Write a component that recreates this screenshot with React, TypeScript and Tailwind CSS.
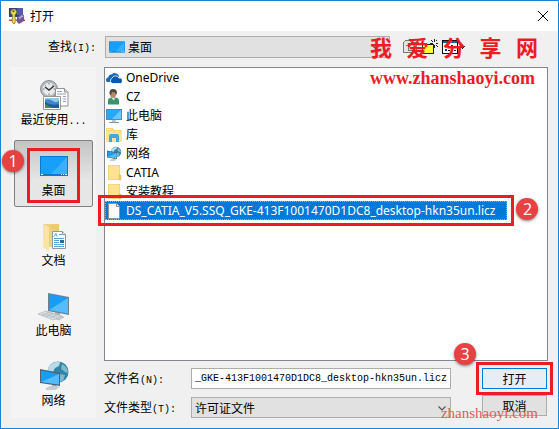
import type { ReactNode } from 'react';

const places = [
  { name: '最近使用', dots: true, icon: <RecentIcon /> },
  { name: '桌面', active: true, icon: <DesktopIcon className="w-8 h-8" /> },
  { name: '文档', icon: <DocumentsIcon /> },
  { name: '此电脑', icon: <ComputerIcon /> },
  { name: '网络', icon: <NetworkIcon className="w-8 h-8" /> },
];

const files = [
  { name: 'OneDrive', icon: <CloudIcon /> },
  { name: 'CZ', icon: <UserIcon /> },
  { name: '此电脑', icon: <MonitorIcon /> },
  { name: '库', icon: <LibraryIcon /> },
  { name: '网络', icon: <NetworkIcon className="w-4 h-4" /> },
  { name: 'CATIA', icon: <FolderIcon /> },
  { name: '安装教程', icon: <FolderIcon /> },
  { name: 'DS_CATIA_V5.SSQ_GKE-413F1001470D1DC8_desktop-hkn35un.licz', selected: true, icon: <FileIcon /> },
];

function KeyIcon() {
  return (
    <svg viewBox="0 0 16 16" className="w-4 h-4">
      <path d="M0 0h14v9H0z" fill="#343a86" />
      <path d="M8 0h6v7H8z" fill="#525ba8" />
      <path d="M0 11.500h16v1.500H0z" fill="#e23b4b" />
      <path d="M8 9l4-3 3 1v6l-5 3-2-2z" fill="#6e5694" />
      <path d="M9 10l4-3 2 1-4 3z" fill="#b3a5cf" />
      <path d="M4.500 1a3 3 0 0 0-1.200 5.700V14l1.500 2L6 15v-1.500l1.500-1L6 11.500V6.700A3 3 0 0 0 4.500 1z" fill="#e8dc4a" stroke="#77701c" strokeWidth=".7" />
      <circle cx="4.500" cy="3.300" r="1" fill="#343a86" />
    </svg>
  );
}

function DesktopIcon({ className }: { className: string }) {
  return (
    <svg viewBox="0 0 32 32" className={className}>
      <path d="M2 6h28v20H2z" fill="#0a78d0" />
      <path d="M3 7h26v17H3z" fill="#16a0fa" />
      <path d="M29 7v17H13z" fill="#38b0ff" />
      <path d="M3 24h2v1H3zM23 24h1v1h-1zM25 24h1v1h-1zM27 24h2v1h-2z" fill="#fff" />
    </svg>
  );
}

function RecentIcon() {
  return (
    <svg viewBox="0 0 32 32" className="w-8 h-8">
      <circle cx="11" cy="10" r="8.500" fill="#b4b8bc" stroke="#8b9094" />
      <circle cx="11" cy="10" r="6.300" fill="#e8eaeb" />
      <path d="M11 4v1.500M11 14.500V16M5 10h1.500M15.500 10H17M6.800 5.800l1 1M15.200 5.800l-1 1" stroke="#777" />
      <path d="M7 8l4 3 5-4" stroke="#333" strokeWidth="1.400" fill="none" />
      <path d="M17.500 9.500h9l3.500 3.500v14H17.500z" fill="#fff" stroke="#929292" />
      <path d="M26.500 9.500V13H30" fill="#ddd" stroke="#929292" />
      <path d="M19 12.500h5M19 15h9M25 17.500h3M25 20h3M25 22.500h3" stroke="#8fa3b8" />
      <path d="M5.500 17.500h17v13h-17z" fill="#fff" stroke="#999" />
      <path d="M7 19h14v10H7z" fill="#8fcaf2" />
      <path d="M7 21q4-2 8 1t6-1v8H7z" fill="#3b87c8" />
      <path d="M7 23q6 4 14 2v4H7z" fill="#1f5c95" />
      <path d="M7 25q5 3 8 4H7z" fill="#4f8b4a" />
    </svg>
  );
}

function DocumentsIcon() {
  return (
    <svg viewBox="0 0 32 32" className="w-8 h-8">
      <path d="M5 4h16v23H10z" fill="#f1d27c" />
      <path d="M5 4l6 3v24l-6-4z" fill="#fbe3a0" />
      <path d="M11 7l3-3h7v8" fill="#eccb70" />
      <path d="M14.500 11.500h10l3 3v14h-13z" fill="#fff" stroke="#8d99a5" />
      <path d="M24.500 11.500v3h3" fill="#d8dfe6" stroke="#8d99a5" />
      <path d="M16 16.500l2-3 1 3M21 14.500h3M16 18.500h10M16 20.500h5M16 22.500h5M16 24.500h10M16 26.500h10" stroke="#58a4dc" fill="none" />
      <path d="M22 20h4v3h-4z" fill="#286b9f" />
    </svg>
  );
}

function ComputerIcon() {
  return (
    <svg viewBox="0 0 32 32" className="w-8 h-8">
      <path d="M17 22l5 1v4h-5z" fill="#a9b5be" />
      <path d="M14 28l5-2 7 1-5 3z" fill="#c8d0d6" stroke="#9aa5ad" strokeWidth=".5" />
      <path d="M10 3l21 4v18l-21-4z" fill="#6e7f8d" />
      <path d="M11 4l19 4v15.500L11 20z" fill="#1b9cf2" />
      <path d="M30 8v15.500L11 20z" fill="#55bdff" />
      <path d="M0 24l8-3 16 5-9 4z" fill="#e2e5e8" stroke="#a4abb1" strokeWidth=".6" />
      <path d="M3 24l14 4M5.500 23l13.500 4.500M8 22l13 4.500M4 26l7-4M8 27l7-4M12 28.500l7-4" stroke="#aab1b7" strokeWidth=".6" />
    </svg>
  );
}

function NetworkIcon({ className }: { className: string }) {
  return (
    <svg viewBox="0 0 32 32" className={className}>
      <circle cx="20" cy="12" r="10.500" fill="#3184a8" />
      <path d="M12 5q5-4 10-3l-1 4-4 2-2 4-5-1q0-4 2-6z" fill="#b8dbe7" />
      <path d="M24 4q6 3 6 9l-3-1-4-3zM22 14l5 1-2 6-4 1z" fill="#7fb9ce" />
      <path d="M14 23l4 1v4h-4z" fill="#9aa7b1" />
      <path d="M8 28q6-4 14-1l-5 3H8z" fill="#c5cdd3" />
      <path d="M2 9l20 4v13L2 23z" fill="#52616d" />
      <path d="M3 10.500l18 3.500v10.500L3 22z" fill="#199cf4" />
      <path d="M21 14v10.500L3 22z" fill="#54bbff" />
    </svg>
  );
}

function CloudIcon() {
  return (
    <svg viewBox="0 0 16 16" className="w-4 h-4">
      <path d="M1 12a2.500 2.500 0 0 1 1.200-4.500A4 4 0 0 1 6 4.300 4.300 4.300 0 0 1 12.500 5L13 7 5 12z" fill="#1667b7" />
      <path d="M6.500 13.500a2.800 2.800 0 0 1-.4-5.300A3.600 3.600 0 0 1 12.800 8a2.800 2.800 0 0 1 1.700 5.500z" fill="#0c59a8" stroke="#fff" strokeWidth=".8" />
    </svg>
  );
}

function UserIcon() {
  return (
    <svg viewBox="0 0 16 16" className="w-4 h-4">
      <path d="M2 15.500V11q0-2 4-2.500h3q4 0 4 3.500v3.500z" fill="#3d9270" />
      <path d="M5 8.500l3 3 1-3z" fill="#eee" />
      <ellipse cx="7" cy="5" rx="3" ry="4" fill="#b68a68" />
      <path d="M3.500 5q-.5-5 3.500-5t4 4l-1 2-1-2.500-3-.5-1 3z" fill="#51473c" />
    </svg>
  );
}

function MonitorIcon() {
  return (
    <svg viewBox="0 0 16 16" className="w-4 h-4">
      <path d="M0 1h16v11H0z" fill="#4a8fbd" />
      <path d="M1 2h14v9H1z" fill="#27a8f6" />
      <path d="M15 2v9H6z" fill="#69c7ff" />
      <path d="M6 12h4v2H6z" fill="#b7c6d0" />
      <path d="M3 14h10v1H3z" fill="#7f98a7" />
    </svg>
  );
}

function LibraryIcon() {
  return (
    <svg viewBox="0 0 16 16" className="w-4 h-4">
      <path d="M0 1h7l1 2h8v12H0z" fill="#f8d671" />
      <path d="M0 4h16v11H0z" fill="#ffe397" />
      <path d="M1 2h4v1H1z" fill="#fff" />
      <path d="M3 15V9q0-2 2-2h6q2 0 2 2v6h-3v-4H6v4z" fill="#3fa9d8" />
    </svg>
  );
}

function FolderIcon() {
  return (
    <svg viewBox="0 0 16 16" className="w-4 h-4">
      <path d="M2 0h12v10l1 1v4H2z" fill="#e8c767" />
      <path d="M2.500.5h11v14h-11z" fill="#ffe391" />
      <path d="M13 10h2v5h-2z" fill="#f2d077" stroke="#d6b04c" strokeWidth=".5" />
    </svg>
  );
}

function FileIcon() {
  return (
    <svg viewBox="0 0 16 16" className="w-4 h-4">
      <path d="M2.500.5h8l3 3v12h-11z" fill="#fafafa" stroke="#929292" />
      <path d="M10.500.5v3h3" fill="#ddd" stroke="#929292" />
    </svg>
  );
}

function Arrow({ className }: { className: string }) {
  return (
    <svg viewBox="0 0 8 5" className={`absolute w-2 h-[5px] pointer-events-none ${className}`}>
      <path d="M.5.5L4 4 7.500.5" fill="none" stroke="#555" strokeWidth="1.200" />
    </svg>
  );
}

// Latin part of a label, half the width of a Chinese character
function Half({ children }: { children: ReactNode }) {
  return <span className="font-['Liberation_Mono',monospace] text-[10px]">{children}</span>;
}

function Badge({ n, className }: { n: number; className: string }) {
  return (
    <span className={`absolute z-10 w-[22px] h-[22px] rounded-full bg-[#e84143] text-white font-['Open_Sans',sans-serif] text-base leading-[22px] text-center shadow-[0_1px_3px_rgba(0,0,0,0.5)] ${className}`}>
      {n}
    </span>
  );
}

function Frame({ className }: { className: string }) {
  return <span className={`absolute border-3 border-[#ed1c24] pointer-events-none ${className}`}></span>;
}

export default function App() {
  return (
    <div className="relative min-h-screen flex flex-col border border-[#1883d7] bg-[#f0f0f0] text-black text-xs font-['Noto_Sans_CJK_SC',sans-serif]">
      <header className="h-[30px] flex items-center bg-white pl-2 pr-[10px]">
        <KeyIcon />
        <h1 className="ml-[5px] flex-1">打开</h1>
        <button aria-label="关闭">
          <svg viewBox="0 0 10 10" className="w-[10px] h-[10px]">
            <path d="M0 0l10 10M10 0L0 10" stroke="#000" />
          </svg>
        </button>
      </header>

      <div className="flex-1 flex flex-col gap-[9px] px-[10px] pt-[5px] pb-[10px]">
        <div className="flex items-center">
          <label htmlFor="lookin" className="w-[94px] pl-[37px]">
            查找<Half>(I):</Half>
          </label>
          <div className="relative flex-1">
            <DesktopIcon className="absolute left-[3px] top-[2px] w-[18px] h-[18px]" />
            <select id="lookin" className="block w-full h-[22px] appearance-none border border-[#adadad] bg-[#e1e1e1] pl-[22px]">
              <option>桌面</option>
            </select>
            <Arrow className="right-[10px] top-[9px]" />
          </div>
          <div className="relative w-[158px] flex items-center gap-1 pl-3">
            <button aria-label="向上一级">
              <svg viewBox="0 0 16 16" className="w-4 h-4" shapeRendering="crispEdges">
                <path d="M1.500 3.500l2-2h4l2 2h5v10h-13z" fill="#e4e4e4" stroke="#777" />
                <path d="M4 6.500h5M6.500 5v6H11" stroke="#777" fill="none" />
              </svg>
            </button>
            <button aria-label="新建文件夹">
              <svg viewBox="0 0 16 16" className="w-4 h-4" shapeRendering="crispEdges">
                <path d="M.5 14.500v-9l1-1h3l1 1h6v9z" fill="#ffff3c" stroke="#222" />
                <path d="M12.500 0v3M12.500 6v3M8 4.500h3M14 4.500h2M9 1l2 2M14 6l2 2M15 1l-1 1" stroke="#222" />
              </svg>
            </button>
            <button aria-label="查看菜单">
              <svg viewBox="0 0 24 16" className="w-6 h-4" shapeRendering="crispEdges">
                <path d="M.5 1.500h15v13H.5z" fill="#fff" stroke="#111" />
                <path d="M1 2h14v2H1z" fill="#1463a5" />
                <path d="M3 6h2v2H3zM9 6h2v2H9zM3 10h2v2H3zM9 10h2v2H9z" fill="#2026a0" />
                <path d="M6 7h2M12 7h2M6 11h2M12 11h2" stroke="#111" />
                <path d="M17 7h6l-3 3z" fill="#111" />
              </svg>
            </button>
            <div className="absolute -left-5 -top-2 w-[168px] text-[#ed1c24] pointer-events-none">
              <p className="flex justify-between text-[22px] leading-[30px] font-bold">
                <span>我</span>
                <span>爱</span>
                <span>分</span>
                <span>享</span>
                <span>网</span>
              </p>
              <p className="font-['Liberation_Serif',serif] text-lg leading-[34px] font-bold whitespace-nowrap">www.zhanshaoyi.com</p>
            </div>
          </div>
        </div>

        <div className="flex-1 flex gap-2">
          <nav className="w-[85px] bg-[#f4f4f4] p-[3px] pb-px flex flex-col gap-[3px]">
            {places.map((place) => (
              <div key={place.name} className="relative">
                <button
                  className={`w-full h-[67px] flex flex-col items-center justify-center pt-[1px] ${
                    place.active ? 'border border-[#808080] rounded-xs bg-linear-to-b from-[#c4c4c4] to-[#e6e6e6] to-60%' : ''
                  }`}
                >
                  {place.icon}
                  <span className="leading-4 whitespace-nowrap">
                    {place.name}
                    {place.dots && <Half>...</Half>}
                  </span>
                </button>
                {place.active && (
                  <>
                    <Frame className="inset-x-[13px] top-2 bottom-1" />
                    <Badge n={1} className="-left-3 top-[10px]" />
                  </>
                )}
              </div>
            ))}
          </nav>

          <div className="flex-1 flex flex-col gap-[7px]">
            <ul className="flex-1 flex flex-col items-start bg-white border border-[#828790] font-['Noto_Sans','Noto_Sans_CJK_SC',sans-serif]">
              {files.map((file) => (
                <li
                  key={file.name}
                  className={`relative h-[19px] flex items-center gap-1 pl-[1px] whitespace-nowrap ${
                    file.selected ? 'bg-[#0078d7] pr-3 text-white outline-1 -outline-offset-1 outline-dotted outline-[#ff9a3c]' : ''
                  }`}
                >
                  {file.icon}
                  {file.name}
                  {file.selected && (
                    <>
                      <Frame className="-inset-x-[7px] -inset-y-[6px]" />
                      <Badge n={2} className="left-full ml-[9px] -top-[3px]" />
                    </>
                  )}
                </li>
              ))}
            </ul>

            <form className="flex gap-[31px] pr-[1px]" onSubmit={(e) => e.preventDefault()}>
              <div className="flex-1 grid grid-cols-[87px_1fr] items-center gap-y-2">
                <label htmlFor="filename">
                  文件名<Half>(N):</Half>
                </label>
                <input
                  id="filename"
                  className="min-w-0 h-[21px] border border-[#adadad] bg-white px-[3px] font-['Liberation_Mono',monospace] text-[10px]"
                  defaultValue="_GKE-413F1001470D1DC8_desktop-hkn35un.licz"
                />
                <label htmlFor="filetype">
                  文件类型<Half>(T):</Half>
                </label>
                <div className="relative">
                  <select id="filetype" className="block w-full h-[21px] appearance-none border border-[#adadad] bg-[#e1e1e1] pl-[3px]">
                    <option>许可证文件</option>
                  </select>
                  <Arrow className="right-[5px] top-[9px]" />
                </div>
              </div>
              <div className="w-[65px] flex flex-col gap-[6px]">
                <div className="relative">
                  <button className="block w-full h-[21px] border border-[#0078d7] bg-[#e5eef6] leading-4">打开</button>
                  <Frame className="-inset-[6px]" />
                  <Badge n={3} className="-left-7 -top-[25px]" />
                </div>
                <button className="h-[21px] border border-[#adadad] bg-[#e1e1e1] leading-4">取消</button>
              </div>
            </form>
          </div>
        </div>
      </div>

      <p className="absolute right-5 bottom-[5px] font-['Liberation_Serif',serif] text-[15px] leading-5 text-[#e05a5a] pointer-events-none">zhanshaoyi.com</p>
    </div>
  );
}
